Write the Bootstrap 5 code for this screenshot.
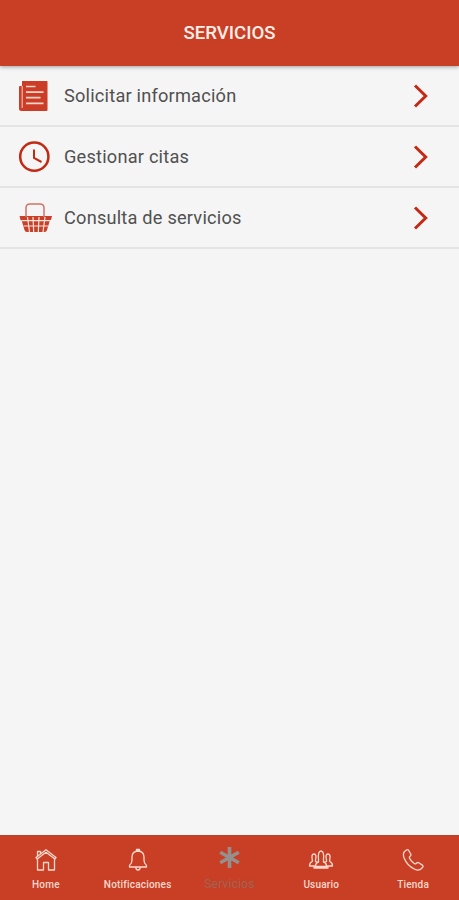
<!DOCTYPE html>
<html lang="es">
<head>
<meta charset="utf-8">
<meta name="viewport" content="width=device-width, initial-scale=1">
<title>Servicios</title>
<link href="https://cdn.jsdelivr.net/npm/bootstrap@5.3.0/dist/css/bootstrap.min.css" rel="stylesheet">
<style>
:root { --brand: #c83f25; --ink: #c22a14; }
body { font-family: Roboto, "Liberation Sans", sans-serif; background: #f5f5f5; }
.app-bar { height: 66px; background: var(--brand); box-shadow: 0 1px 4px rgba(0,0,0,.35); z-index: 1; }
.app-bar h1 { font-size: 18.6px; font-weight: 500; color: #fdeee8; line-height: 22px; }
.service-row { height: 61px; padding: 0 30px 0 18px; border-bottom: 2px solid #e4e4e4; color: #505050; font-size: 18.2px; }
.service-row .glyph { width: 34px; height: 34px; margin-right: 12px; }
.service-label { letter-spacing: .21px; }
.tab-bar { height: 65px; background: var(--brand); border-top: 1px solid #b5452c; }
.tab-link { flex: 1 1 0; min-width: 0; color: #fbd9cd; font-size: 10px; font-weight: 500; line-height: 12px; letter-spacing: .2px; padding-top: 12px; }
.tab-link svg { width: 26px; height: 24px; margin-bottom: 7px; fill: none; stroke: currentColor; stroke-width: 1.3; stroke-linejoin: round; stroke-linecap: round; }
.tab-link.current { color: #a06455; font-size: 12px; font-weight: 400; padding-top: 9px; }
.tab-link.current svg { stroke: #95908d; stroke-width: 3.6; stroke-linecap: butt; margin-bottom: 9px; }
</style>
</head>
<body>
<div class="d-flex flex-column vh-100 overflow-hidden">
  <header class="app-bar d-flex align-items-center justify-content-center flex-shrink-0 position-relative">
    <h1 class="m-0">SERVICIOS</h1>
  </header>
  <main class="flex-grow-1">
    <a class="service-row d-flex align-items-center text-decoration-none" href="#">
      <svg class="glyph" viewBox="0 0 34 34"><path fill="#cb3d26" d="M4 2h25q.5 0 .5.500v28.500q0 1-1 1H3.500Q1 32 1 29.500V8q0-1 1-1h2z"/><path d="M4.200 7v22" stroke="#f3b5a6" stroke-width="1.200"/><path d="M8 7.500h9.500M8 13.200h17.500M8 18.700h14.500M8 24.300h17.500" stroke="#fbd5c8" stroke-width="1.700"/></svg>
      <span class="service-label flex-grow-1">Solicitar información</span>
      <svg width="16" height="24" viewBox="0 0 16 24" fill="none" stroke="#c22a14" stroke-width="3"><path d="M2 1.500 12.700 12 2 22.500"/></svg>
    </a>
    <a class="service-row d-flex align-items-center text-decoration-none" href="#">
      <svg class="glyph" viewBox="0 0 34 34" fill="none" stroke="#c22a14"><circle cx="16.300" cy="16.700" r="14.100" stroke-width="2.500"/><path d="M16 9.500v8.500l7.500 4" stroke-width="2"/></svg>
      <span class="service-label flex-grow-1">Gestionar citas</span>
      <svg width="16" height="24" viewBox="0 0 16 24" fill="none" stroke="#c22a14" stroke-width="3"><path d="M2 1.500 12.700 12 2 22.500"/></svg>
    </a>
    <a class="service-row d-flex align-items-center text-decoration-none" href="#">
      <svg class="glyph" viewBox="0 0 34 34"><path fill="#c83f2a" d="M1.500 15h32.500l-1 4h-1l-3 10q-.5 2-2.500 2H9q-2 0-2.500-2L3.500 19h-1z"/><path fill="none" stroke="#cf7465" stroke-width="1.500" d="M8 16V7q0-4 4-4h10q4 0 4 4v9"/><path fill="none" stroke="#fae5dc" stroke-width="1.200" d="M4 19.700h28M5.500 25h24.500M9.500 16l2 15M15 16l.7 15M21 16l-.7 15M27 16l-2 15"/></svg>
      <span class="service-label flex-grow-1">Consulta de servicios</span>
      <svg width="16" height="24" viewBox="0 0 16 24" fill="none" stroke="#c22a14" stroke-width="3"><path d="M2 1.500 12.700 12 2 22.500"/></svg>
    </a>
  </main>
  <nav class="tab-bar d-flex flex-shrink-0">
    <a class="tab-link d-flex flex-column align-items-center text-decoration-none" href="#">
      <svg viewBox="0 0 26 24"><path d="M4.500 10.500V22h6v-7.500h5V22h6V10.500M3 9.500 13 1.800l10 7.700-1.200 1.600L13 4.300l-8.800 6.800zM4.500 8V3.500h3V6"/></svg>
      <span>Home</span>
    </a>
    <a class="tab-link d-flex flex-column align-items-center text-decoration-none" href="#">
      <svg viewBox="0 0 26 24"><path d="M4.500 19v-1.500Q7 15.500 7 12V9q0-5.500 6-6 6 .5 6 6v3q0 3.500 2.500 5.500V19zM11.500 3V1.500h3V3M10.800 19q0 3 2.200 3t2.200-3"/></svg>
      <span>Notificaciones</span>
    </a>
    <a class="tab-link current d-flex flex-column align-items-center text-decoration-none" href="#" aria-current="page">
      <svg viewBox="0 0 26 24"><path d="M13.500 2v21M4.200 7.200l18.600 10.600M22.800 7.200 4.200 17.800"/></svg>
      <span>Servicios</span>
    </a>
    <a class="tab-link d-flex flex-column align-items-center text-decoration-none" href="#">
      <svg viewBox="0 0 26 24"><path d="M10.500 11.500Q9.700 3 13 3t2.500 8.500v2.500q3 .8 3 4.500h-11q0-3.700 3-4.500zM9.300 14.200 7.500 13.500V12Q9 6 6 6t-1.700 6v1.500Q1.500 14.500 1.500 18h6M16.700 14.200l1.800-.7V12Q17 6 20 6t1.700 6v1.500q2.800 1 2.800 4.500h-6M6 18.500v1.500h14v-1.500"/></svg>
      <span>Usuario</span>
    </a>
    <a class="tab-link d-flex flex-column align-items-center text-decoration-none" href="#">
      <svg viewBox="0 0 26 24"><path d="M4.500 3.500 6.500 2q1.300-.8 2.200.5l2 3.500q.7 1.200-.6 2.200-1.200.9-.5 2.200 2 3.500 5 5.300 1.200.6 2-.5.900-1.200 2.200-.4l3.500 2.300q1.200.9.300 2.200-3 4.500-8.300 1.700Q7 17.500 3.900 9.500 2.700 5.500 4.500 3.500z"/></svg>
      <span>Tienda</span>
    </a>
  </nav>
</div>
<script src="https://cdn.jsdelivr.net/npm/bootstrap@5.3.0/dist/js/bootstrap.bundle.min.js"></script>
</body>
</html>
